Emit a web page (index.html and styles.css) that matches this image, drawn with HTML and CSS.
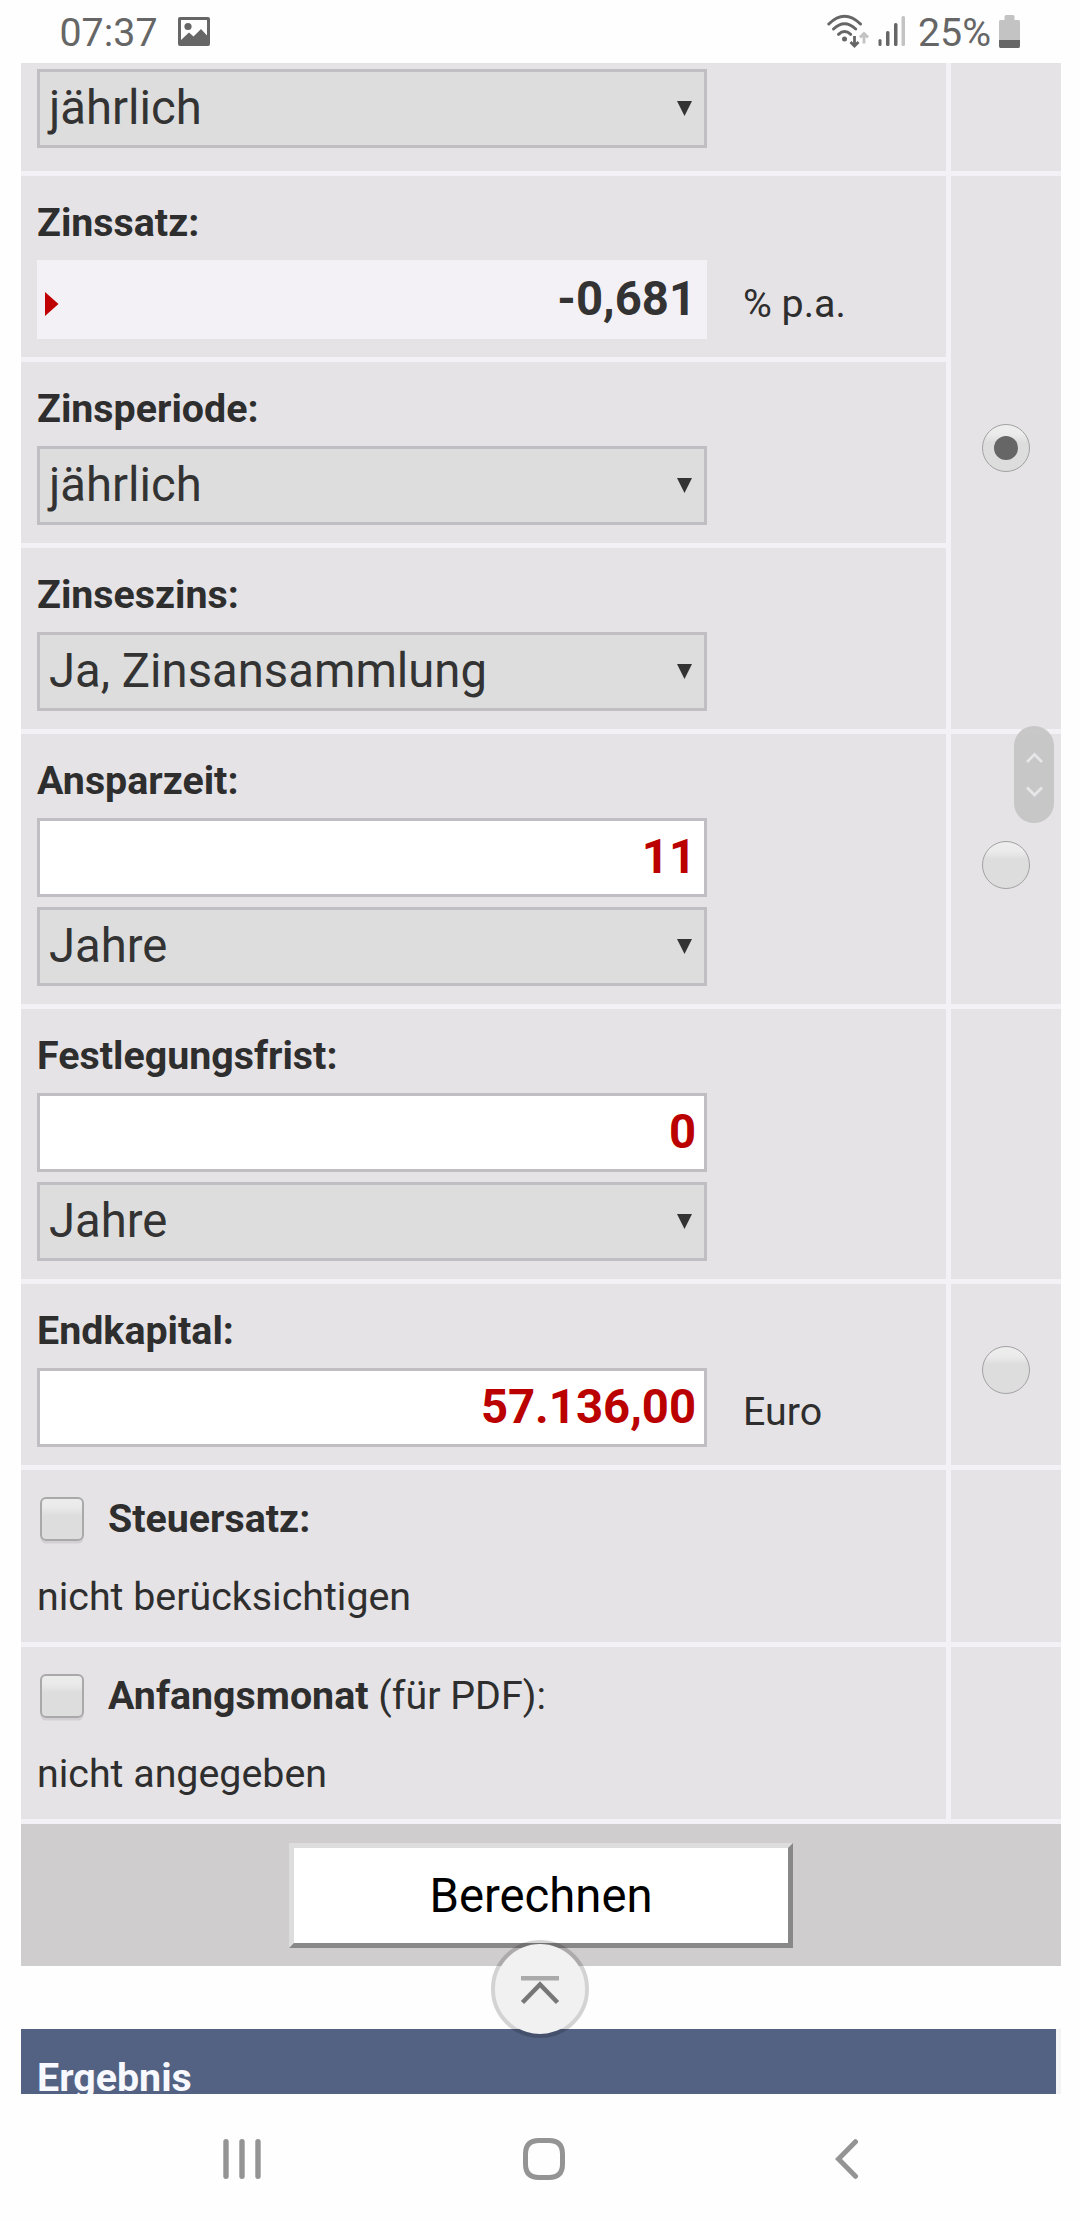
FILE: index.html
```html
<!DOCTYPE html>
<html lang="de">
<head>
<meta charset="utf-8">
<title>Zinsrechner</title>
<link rel="stylesheet" href="styles.css">
</head>
<body>
<svg class="defs" aria-hidden="true">
  <symbol id="caret" viewBox="0 0 15 15"><path d="M0 0H15L7.5 15Z" fill="#333"/></symbol>
</svg>

<header class="status">
  <span class="clock">07:37</span>
  <svg class="picture" width="32" height="29" viewBox="0 0 32 29">
    <path fill="#666" fill-rule="evenodd" d="M2 0H30Q32 0 32 2V27Q32 29 30 29H2Q0 29 0 27V2Q0 0 2 0ZM3 3V23L11 15.5L15.5 19.5L23 12L29 18.5V3Z"/>
    <circle cx="10" cy="9.500" r="3.600" fill="#666"/>
  </svg>
  <span class="spacer"></span>
  <svg class="wifi" width="42" height="34" viewBox="0 0 42 34">
    <g fill="none" stroke="#666" stroke-width="3" stroke-linecap="round">
      <path d="M1.800 10Q17.500-5.500 33.500 10"/>
      <path d="M6.500 15Q17.500 4.500 28.700 15"/>
      <path d="M11.500 20.300Q17.500 14.800 23.700 20.300"/>
    </g>
    <circle cx="17.500" cy="25" r="2.500" fill="#666"/>
    <path d="M27.500 22V31M23.500 28L27.500 32L31.500 28" fill="none" stroke="#666" stroke-width="2.800"/>
    <path d="M37 29.500V20M33 23.500L37 19.500L41 23.500" fill="none" stroke="#c3c3c3" stroke-width="2.800"/>
  </svg>
  <svg class="signal" width="28" height="30" viewBox="0 0 28 30">
    <rect x="0.500" y="23" width="3" height="7" rx="1.500" fill="#666"/>
    <rect x="8" y="15" width="3.500" height="15" rx="1.500" fill="#666"/>
    <rect x="16" y="7" width="3.500" height="23" rx="1.500" fill="#666"/>
    <rect x="23.500" y="0" width="3.500" height="30" rx="1.500" fill="#c3c3c3"/>
  </svg>
  <span class="percent">25%</span>
  <svg class="battery" width="21" height="33" viewBox="0 0 21 33">
    <path d="M5.500 5V1.500Q5.500 0 7 0H14Q15.500 0 15.500 1.500V5H19.500Q21 5 21 6.500V25H0V6.500Q0 5 1.500 5Z" fill="#c3c3c3"/>
    <path d="M0 25H21V31Q21 33 19.500 33H1.500Q0 33 0 31Z" fill="#666"/>
  </svg>
</header>

<main class="page">
  <form class="calc">
    <div class="cell first">
      <div class="field select"><span>jährlich</span><svg class="caret"><use href="#caret"/></svg></div>
    </div>
    <div class="cell"></div>

    <div class="cell">
      <div class="label">Zinssatz:</div>
      <div class="line">
        <div class="field number readonly">
          <svg class="marker" viewBox="0 0 14 24"><path d="M0 0L13.500 12L0 24Z" fill="#c00000"/></svg>
          <span>-0,681</span>
        </div>
        <span class="unit">% p.a.</span>
      </div>
    </div>
    <div class="cell choice span3"><span class="radio checked"></span></div>

    <div class="cell">
      <div class="label">Zinsperiode:</div>
      <div class="field select"><span>jährlich</span><svg class="caret"><use href="#caret"/></svg></div>
    </div>

    <div class="cell">
      <div class="label">Zinseszins:</div>
      <div class="field select"><span>Ja, Zinsansammlung</span><svg class="caret"><use href="#caret"/></svg></div>
    </div>

    <div class="cell">
      <div class="label">Ansparzeit:</div>
      <div class="stack">
        <div class="field number"><span>11</span></div>
        <div class="field select"><span>Jahre</span><svg class="caret"><use href="#caret"/></svg></div>
      </div>
    </div>
    <div class="cell choice"><span class="radio"></span></div>

    <div class="cell">
      <div class="label">Festlegungsfrist:</div>
      <div class="stack">
        <div class="field number"><span>0</span></div>
        <div class="field select"><span>Jahre</span><svg class="caret"><use href="#caret"/></svg></div>
      </div>
    </div>
    <div class="cell"></div>

    <div class="cell">
      <div class="label">Endkapital:</div>
      <div class="line">
        <div class="field number"><span>57.136,00</span></div>
        <span class="unit">Euro</span>
      </div>
    </div>
    <div class="cell choice"><span class="radio"></span></div>

    <div class="cell option">
      <div class="toggle"><span class="checkbox"></span><span><b>Steuersatz:</b></span></div>
      <div class="note">nicht berücksichtigen</div>
    </div>
    <div class="cell"></div>

    <div class="cell option">
      <div class="toggle"><span class="checkbox"></span><span><b>Anfangsmonat</b> (für PDF):</span></div>
      <div class="note">nicht angegeben</div>
    </div>
    <div class="cell"></div>

    <div class="submit"><button type="button" class="button">Berechnen</button></div>
  </form>

  <section class="result"><h2 class="title">Ergebnis</h2></section>

  <div class="scroller">
    <svg width="40" height="97" viewBox="0 0 40 97" fill="none" stroke="#e6e5e7" stroke-width="2.800">
      <path d="M13 36L20.500 28.500L28 36M13 61.500L20.500 69L28 61.500"/>
    </svg>
  </div>
  <div class="to-top">
    <svg width="98" height="98" viewBox="0 0 98 98" fill="none">
      <circle cx="49" cy="49" r="45" fill="#f1f1f1"/>
      <circle cx="49" cy="49" r="47" stroke="#000" stroke-opacity=".17" stroke-width="4"/>
      <path d="M30 38.200H68" stroke="#aaa" stroke-width="4.500"/>
      <path d="M31.500 62.500L49 44.500L66.500 62.500" stroke="#777" stroke-width="4.500"/>
    </svg>
  </div>
</main>

<nav class="navbar">
  <svg width="38" height="42" viewBox="0 0 38 42" fill="none" stroke="#949494" stroke-width="5.400" stroke-linecap="round">
    <path d="M3 3.700V38.300M19 3.700V38.300M35 3.700V38.300"/>
  </svg>
  <svg class="home" width="42" height="42" viewBox="0 0 42 42" fill="none" stroke="#949494" stroke-width="5">
    <path d="M16 2.500H26Q39.500 2.500 39.500 16V26Q39.500 39.500 26 39.500H16Q2.500 39.500 2.500 26V16Q2.500 2.500 16 2.500Z"/>
  </svg>
  <svg width="24" height="42" viewBox="0 0 24 42" fill="none" stroke="#949494" stroke-width="5" stroke-linecap="round">
    <path d="M20.500 3.700L3.500 21L20.500 38.300"/>
  </svg>
</nav>
</body>
</html>
```
FILE: styles.css
```css
* { box-sizing: border-box; }

body {
  margin: 0;
  width: 1080px;
  height: 2220px;
  display: flex;
  flex-direction: column;
  overflow: hidden;
  background: #fefefe;
  color: #2e2e2e;
  font: 39.375px/48px Roboto, sans-serif;
}

svg { display: block; flex: none; }
.defs { position: absolute; width: 0; height: 0; }

.status {
  flex: none;
  height: 63px;
  padding: 0 60px 0 59.500px;
  display: flex;
  align-items: flex-start;
  color: #666;
}
.clock, .percent { margin-top: 9px; }
.clock { width: 118px; }
.picture { margin-top: 17px; }
.spacer { flex: 1; }
.wifi { margin: 14px 9px 0 0; }
.signal { margin: 16px 12px 0 0; }
.percent { width: 81px; }
.battery { margin-top: 15px; }

.page {
  position: relative;
  flex: none;
  height: 2031px;
  padding: 0 19px 0 21px;
  overflow: hidden;
}

.calc {
  display: grid;
  grid-template-columns: 925px 110px;
  gap: 5px;
  background: #f3f1f5;
}
.cell {
  padding: 23px 16px 18px;
  background: #e5e3e6;
}
.first { padding-top: 6px; padding-bottom: 23px; }
.span3 { grid-row: span 3; }

.label { margin-bottom: 13px; font-weight: 700; }
.line { display: flex; align-items: flex-start; gap: 36px; }
.stack { display: flex; flex-direction: column; gap: 10px; }
.unit { margin-top: 20px; }

.field {
  width: 670px;
  height: 79px;
  display: flex;
  align-items: center;
  border: 3px solid #c0bec3;
  color: #333;
  font-size: 47.250px;
  line-height: 72px;
}
.field span { height: 73px; }
.select {
  justify-content: space-between;
  padding: 0 12px 0 9px;
  background: #ddd;
}
.caret { width: 15px; height: 15px; }
.number {
  justify-content: flex-end;
  padding: 0 8px;
  background: #fff;
  color: #b00;
  font-weight: 700;
}
.readonly {
  justify-content: space-between;
  padding-left: 5px;
  background: #f3f1f5;
  border-color: #f3f1f5;
  color: #333;
}
.marker { width: 14px; height: 24px; margin-top: 9px; }

.choice {
  display: flex;
  align-items: center;
  justify-content: center;
  padding: 0 0 9px;
}
.radio {
  width: 48px;
  height: 48px;
  display: grid;
  place-items: center;
  border: 1px solid #a2a2a2;
  border-radius: 50%;
  background: linear-gradient(#eee 0, #ebebeb 20%, #ddd 38%);
}
.checked::after {
  content: "";
  width: 24px;
  height: 24px;
  border-radius: 50%;
  background: #666;
}

.option { padding: 25px 16px 21px; }
.toggle {
  display: flex;
  align-items: flex-start;
  gap: 24px;
  padding-left: 3px;
}
.checkbox {
  width: 44px;
  height: 44px;
  margin-top: 2px;
  border: 2px solid #a9a9a9;
  border-radius: 6px;
  background: linear-gradient(#ececec 0, #eaeaea 20%, #ddd 42%);
  box-shadow: 0 3px 0 -0.500px #d2d0d3;
}
.note { margin-top: 30px; }

.submit {
  grid-column: 1 / -1;
  height: 142px;
  padding-top: 19px;
  background: #cfcdce;
}
.button {
  display: block;
  width: 504px;
  height: 105px;
  margin: 0 auto;
  padding: 0;
  border: 5px solid;
  border-color: #ddd #888 #888 #ddd;
  border-radius: 0;
  background: #fff;
  color: #000;
  font: 47.250px/94px Roboto, sans-serif;
}

.result {
  margin-top: 63px;
  height: 90px;
  padding: 25px 16px 0;
  border-right: 5px solid #f3f3f5;
  background: #536283;
}
.title {
  margin: 0;
  color: #f8f8ff;
  font-size: inherit;
  font-weight: 700;
}

.scroller {
  position: absolute;
  left: 1014px;
  top: 663px;
  width: 40px;
  height: 97px;
  border-radius: 20px;
  background: rgba(195, 195, 195, .9);
}
.to-top {
  position: absolute;
  left: 491px;
  top: 1877px;
}

.navbar {
  flex: none;
  height: 126px;
  padding: 44px 0 0 223px;
  display: flex;
}
.home { margin: 0 270px 0 262px; }
```
